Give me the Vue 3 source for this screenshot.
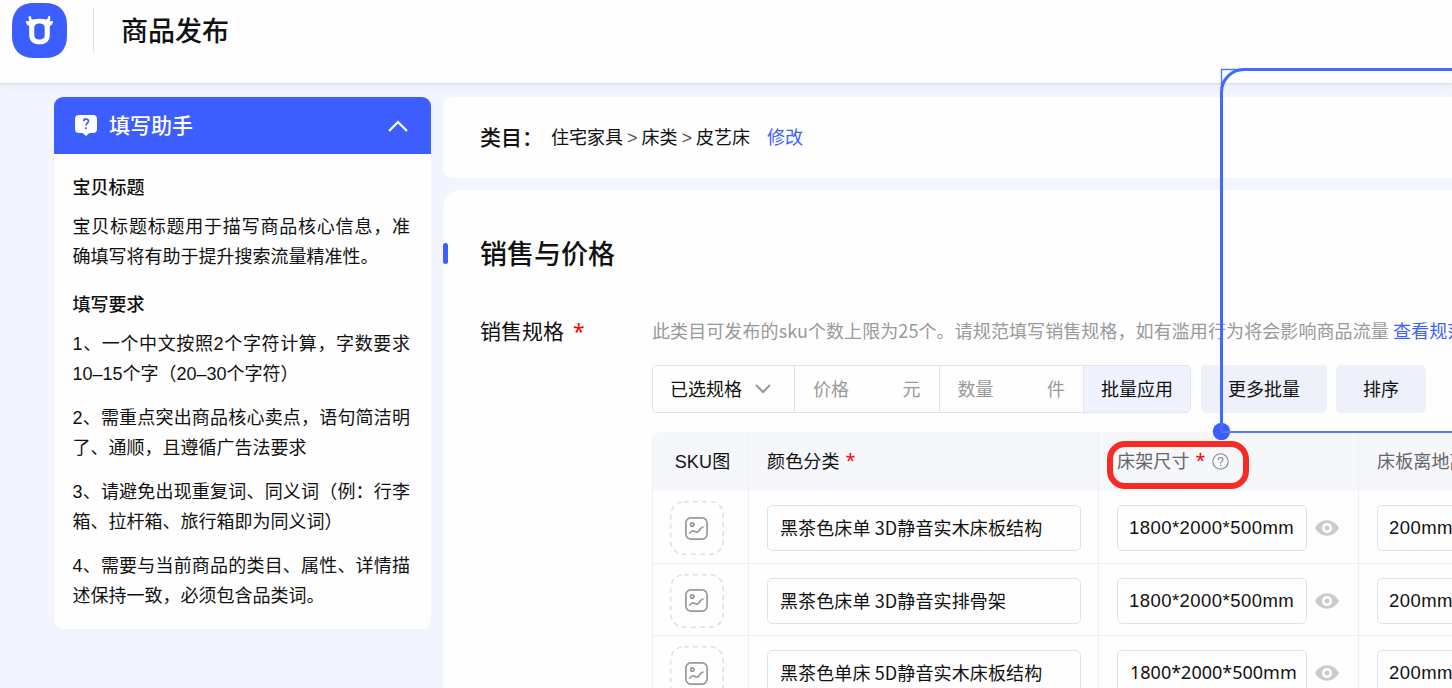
<template>
  <div class="page">
    <header class="top-bar">
      <svg class="logo" viewBox="0 0 55 55">
        <path fill="#3d5eff" d="M22 0h11c14 0 22 8 22 22v11c0 14-8 22-22 22H22C8 55 0 47 0 33V22C0 8 8 0 22 0z" />
        <path fill="#fff" fill-rule="evenodd" d="M16.800 13.200l1.900-.3c.1 1.800.7 3 2 3.700 4-1.300 9.600-1.300 13.600 0 1.300-.7 1.900-1.900 2-3.700l1.900.3c.3 1.900.1 3.600-.5 5.100l3.500-.3c-.2 2.500-1.400 4.300-3.400 4.900V32c0 6-3.800 9.300-10.300 9.300S17.200 38 17.200 32v-9.100c-2-.6-3.200-2.400-3.400-4.900l3.500.3c-.6-1.500-.8-3.200-.5-5.100zM22.300 24.500v8c0 2.600 1.900 4 5.200 4s5.200-1.400 5.200-4v-8c0-2.600-1.900-4-5.200-4s-5.200 1.400-5.200 4z" />
      </svg>
      <span class="divider"></span>
      <h1 class="page-title">商品发布</h1>
    </header>

    <div class="body">
      <aside class="helper">
        <div class="helper-head">
          <svg class="helper-icon" viewBox="0 0 22 21">
            <path fill="#fff" d="M4 0h14a4 4 0 0 1 4 4v10a4 4 0 0 1-4 4h-3.500l-3.500 3-3.500-3H4a4 4 0 0 1-4-4V4a4 4 0 0 1 4-4z" />
            <path fill="none" stroke="#3d5eff" stroke-width="1.700" d="M8.600 6.400c.2-3.400 5.200-3 4.900-.2-.2 2-2.500 2-2.500 4.400M10.900 12.300v1.900" />
          </svg>
          <span class="helper-name">填写助手</span>
          <svg class="helper-arrow" viewBox="0 0 20 12">
            <path d="M1 11l9-9 9 9" fill="none" stroke="#fff" stroke-width="2.200" />
          </svg>
        </div>
        <div class="helper-body">
          <section v-for="tip in tips" :key="tip.title" class="tip">
            <h4>{{ tip.title }}</h4>
            <p v-for="line in tip.lines" :key="line">{{ line }}</p>
          </section>
        </div>
      </aside>

      <main class="content">
        <div class="category">
          <span class="category-label">类目：</span>
          <span class="category-path">住宅家具<i>&gt;</i>床类<i>&gt;</i>皮艺床</span>
          <a class="link">修改</a>
        </div>

        <div class="sales">
          <h2 class="sales-title"><span>销售与价格</span></h2>
          <div class="form-row">
            <div class="form-label">销售规格<b class="star">*</b></div>
            <div class="form-content">
              <div class="hint">此类目可发布的sku个数上限为25个。请规范填写销售规格，如有滥用行为将会影响商品流量 <a class="link">查看规范</a></div>

              <div class="batch">
                <div class="batch-group">
                  <div class="batch-select">
                    已选规格
                    <svg viewBox="0 0 16 10"><path d="M1 1l7 7 7-7" fill="none" stroke="#999" stroke-width="2" /></svg>
                  </div>
                  <div class="batch-input"><span>价格</span><span>元</span></div>
                  <div class="batch-input"><span>数量</span><span>件</span></div>
                  <button class="apply">批量应用</button>
                </div>
                <button class="plain more">更多批量</button>
                <button class="plain sort">排序</button>
              </div>

              <div class="sku-table">
                <div class="sku-row sku-head">
                  <div class="cell pic">SKU图</div>
                  <div class="cell">颜色分类<b class="star">*</b></div>
                  <div class="cell muted">
                    床架尺寸<b class="star">*</b>
                    <svg class="question" viewBox="0 0 17 17">
                      <circle cx="8.500" cy="8.500" r="7.700" fill="none" stroke="#888" stroke-width="1.100" />
                      <path d="M6.100 6.900c0-3.200 4.900-3.200 4.900-.3 0 1.800-2.500 1.900-2.500 4M8.500 11.700v1.300" fill="none" stroke="#888" stroke-width="1.100" />
                    </svg>
                    <span class="mark"></span>
                  </div>
                  <div class="cell muted">床板离地高度</div>
                </div>
                <div v-for="(row, index) in rows" :key="index" class="sku-row">
                  <div class="cell pic">
                    <div class="upload">
                      <svg class="upload-frame" viewBox="0 0 54 54"><rect x=".75" y=".75" width="52.500" height="52.500" rx="13" /></svg>
                      <svg class="upload-icon" viewBox="0 0 23 23">
                        <rect x=".9" y=".9" width="21.200" height="21.200" rx="5" />
                        <circle cx="7.300" cy="7.500" r="1.700" />
                        <path d="M4.500 16.700c.6-2.600 3.400-3.400 5.400-2.200s3.600.4 4.400-1.200 1.600-3.300 4.300-3.300" />
                      </svg>
                    </div>
                  </div>
                  <div class="cell"><div class="field">{{ row.name }}</div></div>
                  <div class="cell">
                    <div class="field size" :class="{ wide: row.wide }">{{ row.size }}</div>
                    <svg class="eye" viewBox="0 0 24 16">
                      <path fill="#ccc" fill-rule="evenodd" d="M0 8C5.500-2.300 18.500-2.300 24 8 18.500 18.300 5.500 18.300 0 8zM12 3a5 5 0 1 0 0 10 5 5 0 0 0 0-10z" />
                      <circle cx="12" cy="8" r="2.500" fill="#ccc" />
                    </svg>
                  </div>
                  <div class="cell"><div class="field height">{{ row.height }}</div></div>
                </div>
              </div>
            </div>
          </div>
        </div>
      </main>
    </div>

    <svg class="callout" width="240" height="380" viewBox="0 0 240 380">
      <circle cx="9.500" cy="371.500" r="8.700" fill="#3d5eff" />
      <path d="M9.500 371.500V9.500H240" stroke="#4a7dff" stroke-width="1.400" />
      <path d="M9.500 372H240" stroke="#4a7dff" stroke-width="2" />
      <path d="M9.500 372V32a22.500 22.500 0 0 1 22.500-22.500H240" stroke="#4069ff" stroke-width="3" />
    </svg>
  </div>
</template>

<script setup>
import { ref } from 'vue'

const tips = ref([
  {
    title: '宝贝标题',
    lines: ['宝贝标题标题用于描写商品核心信息，准确填写将有助于提升搜索流量精准性。'],
  },
  {
    title: '填写要求',
    lines: [
      '1、一个中文按照2个字符计算，字数要求10–15个字（20–30个字符）',
      '2、需重点突出商品核心卖点，语句简洁明了、通顺，且遵循广告法要求',
      '3、请避免出现重复词、同义词（例：行李箱、拉杆箱、旅行箱即为同义词）',
      '4、需要与当前商品的类目、属性、详情描述保持一致，必须包含品类词。',
    ],
  },
])

const rows = ref([
  { name: '黑茶色床单 3D静音实木床板结构', size: '1800*2000*500mm', height: '200mm' },
  { name: '黑茶色床单 3D静音实排骨架', size: '1800*2000*500mm', height: '200mm' },
  { name: '黑茶色单床 5D静音实木床板结构', size: '1800*2000*500mm', height: '200mm', wide: true },
])
</script>

<style>
body {
  margin: 0;
  overflow: hidden;
}
</style>

<style scoped>
.page {
  position: relative;
  width: 1452px;
  height: 688px;
  overflow: hidden;
  background: #f2f5ff;
  color: #111;
  font-family: 'Noto Sans CJK SC', sans-serif;
  font-size: 18px;
  box-sizing: border-box;
}

.page * {
  box-sizing: border-box;
}

h1,
h2,
h4,
p {
  margin: 0;
}

.top-bar {
  display: flex;
  align-items: center;
  height: 83px;
  padding: 0 12px 22px;
  background: #fefefe;
  box-shadow: 0 1px 2px rgba(40, 50, 80, 0.12), 0 3px 10px rgba(40, 50, 80, 0.04);
}

.logo {
  width: 55px;
  height: 55px;
}

.divider {
  width: 1px;
  height: 45px;
  margin: 0 27px 0 26px;
  background: #dfe2ea;
}

.page-title {
  padding-bottom: 2px;
  font-size: 27px;
  font-weight: 500;
  line-height: 38px;
}

.body {
  display: flex;
  align-items: flex-start;
  gap: 12px;
  padding: 14px 0 0 54px;
}

.helper {
  flex: none;
  width: 377px;
  height: 532px;
  border-radius: 9px;
  background: #fefefe;
  overflow: hidden;
}

.helper-head {
  display: flex;
  align-items: center;
  height: 57px;
  padding: 0 23px 0 21px;
  background: #3d5eff;
  color: #fff;
}

.helper-icon {
  width: 22px;
  height: 21px;
}

.helper-name {
  margin-left: 12px;
  padding-bottom: 4px;
  font-size: 21px;
  font-weight: 500;
  line-height: 30px;
}

.helper-arrow {
  width: 20px;
  height: 12px;
  margin-left: auto;
}

.helper-body {
  padding: 19px 21px 0 18.5px;
  font-family: 'Liberation Sans', 'Noto Sans CJK SC', sans-serif;
  line-height: 30px;
}

.tip + .tip {
  margin-top: 18px;
}

.tip h4 {
  margin-bottom: 9px;
  font-size: 18px;
  font-weight: 500;
}

.tip p {
  text-align: justify;
}

.tip p + p {
  margin-top: 14px;
}

.content {
  flex: 1;
  min-width: 0;
}

.category {
  display: flex;
  align-items: center;
  height: 81px;
  padding: 0 0 4px 37px;
  border-radius: 9px 0 0 9px;
  background: #fefefe;
}

.category-label {
  width: 71px;
  font-size: 21px;
  font-weight: 500;
}

.category-path i {
  margin: 0 4px;
  font-family: 'Liberation Sans', sans-serif;
  font-size: 18px;
  font-style: normal;
  color: #555;
}

.category .link {
  margin-left: 17px;
}

.link {
  color: #3d5eff;
}

.sales {
  height: 520px;
  margin-top: 12px;
  padding-top: 43px;
  border-radius: 18px 0 0 0;
  background: #fefefe;
}

.sales-title {
  display: flex;
  align-items: center;
  height: 40px;
  font-size: 27px;
  font-weight: 500;
}

.sales-title span {
  padding-bottom: 2px;
}

.sales-title::before {
  content: '';
  width: 5px;
  height: 21px;
  margin-right: 32px;
  border-radius: 3px;
  background: #3d5eff;
}

.form-row {
  display: flex;
  margin-top: 42px;
  padding-left: 37px;
}

.form-label {
  flex: none;
  width: 172px;
  font-size: 21px;
  line-height: 31px;
}

.star {
  margin-left: 9px;
  color: #f00;
  font-family: 'Noto Sans', sans-serif;
  font-weight: 400;
}

.cell .star {
  margin-left: 6px;
}

.form-content {
  flex: none;
  width: 900px;
}

.hint {
  color: #999;
  letter-spacing: 0.09px;
  line-height: 30px;
  white-space: nowrap;
}

.batch {
  display: flex;
  margin-top: 20px;
  height: 48px;
}

.batch-group {
  display: flex;
  width: 539px;
}

.batch-select,
.batch-input {
  display: flex;
  align-items: center;
  justify-content: space-between;
  padding-bottom: 2px;
  border: 1px solid #dfe3ee;
  border-right: none;
}

.batch-select {
  width: 142px;
  padding-left: 17px;
  padding-right: 23px;
  border-radius: 5px 0 0 5px;
}

.batch-select svg {
  width: 16px;
  height: 10px;
  margin-top: 2px;
}

.batch-input {
  width: 144.5px;
  padding-left: 18px;
  padding-right: 18px;
  color: #999;
}

button {
  padding: 0 0 2px;
  border: none;
  color: #111;
  font-family: inherit;
  font-size: 18px;
}

.apply {
  flex: 1;
  border: 1px solid #dfe4fb;
  border-radius: 0 5px 5px 0;
  background: #f0f3ff;
}

.plain {
  border-radius: 5px;
  background: #eef1f9;
}

.more {
  width: 126px;
  margin-left: 10px;
}

.sort {
  width: 90px;
  margin-left: 9px;
}

.sku-table {
  margin-top: 19px;
  border-left: 1px solid #eceef9;
  border-radius: 9px 0 0 0;
  overflow: hidden;
}

.sku-row {
  display: grid;
  grid-template-columns: 96px 350px 260px 300px;
  height: 72.5px;
  border-bottom: 1px solid #eceef9;
}

.sku-head {
  height: 59px;
  border-bottom: none;
  background: #f5f7fa;
}

.cell {
  display: flex;
  align-items: center;
  padding: 3px 0 0 18px;
  border-right: 1px solid #eceef9;
  white-space: nowrap;
}

.cell.pic {
  justify-content: center;
  padding-left: 0;
  padding-right: 8px;
}

.sku-head .cell {
  padding-top: 0;
  padding-bottom: 3px;
  letter-spacing: 0.15px;
}

.sku-head .cell.pic {
  padding-left: 7px;
  padding-right: 3px;
  font-family: 'Liberation Sans', 'Noto Sans CJK SC', sans-serif;
}

.muted {
  position: relative;
  color: #666;
}

.question {
  width: 17px;
  height: 17px;
  margin: 3px 0 0 6px;
}

.mark {
  position: absolute;
  left: 8px;
  top: 9px;
  width: 142px;
  height: 48px;
  border: 6px solid #f52b24;
  border-radius: 18px;
}

.upload {
  display: grid;
  place-items: center;
}

.upload > svg {
  grid-area: 1 / 1;
  fill: none;
}

.upload-frame {
  width: 54px;
  height: 54px;
  stroke: #dcdfe9;
  stroke-width: 1.5;
  stroke-dasharray: 5 4;
}

.upload-icon {
  width: 23px;
  height: 23px;
  stroke: #999;
  stroke-width: 1.7;
}

.field {
  width: 314px;
  height: 46px;
  padding-left: 12px;
  border: 1px solid #dfe2ee;
  border-radius: 5px;
  letter-spacing: 0.12px;
  line-height: 43px;
}

.field.size,
.field.height {
  padding-left: 11px;
  font-family: 'Liberation Sans', sans-serif;
  font-size: 18.5px;
  letter-spacing: 0.45px;
}

.field.size {
  width: 190px;
}

.field.height {
  width: 250px;
}

.field.size.wide {
  padding-left: 12px;
  font-family: 'Noto Sans', sans-serif;
  font-size: 18px;
  letter-spacing: 0;
}

.eye {
  width: 24px;
  height: 16px;
  margin-left: 8px;
}

.callout {
  position: absolute;
  left: 1212px;
  top: 60px;
  fill: none;
}
</style>
